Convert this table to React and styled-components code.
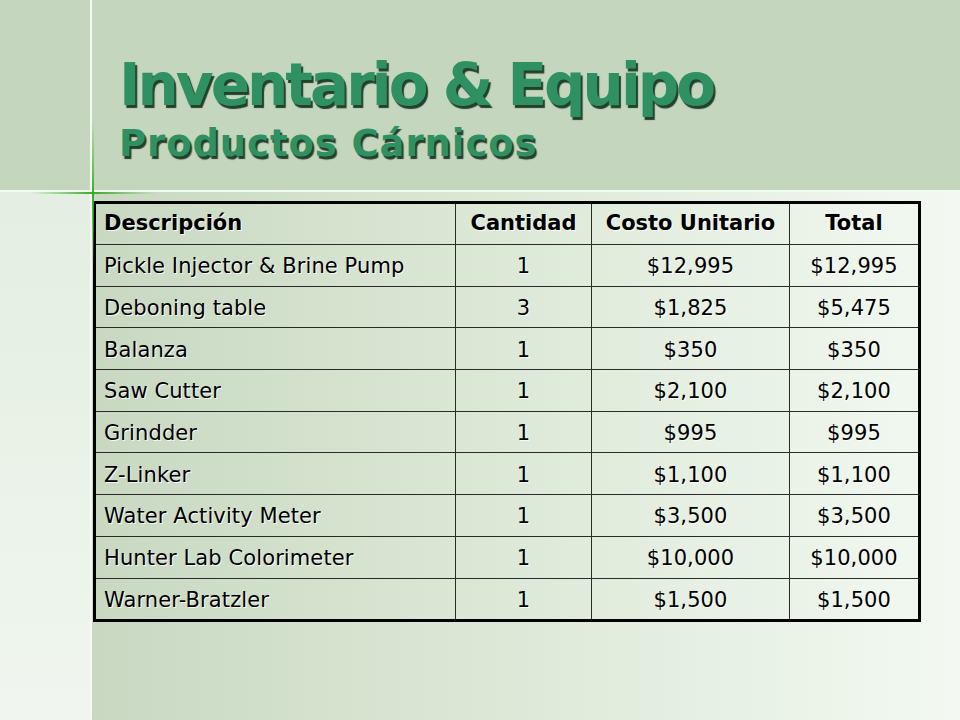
import React from "react";
import styled, { createGlobalStyle } from "styled-components";

const GlobalStyle = createGlobalStyle`
  html, body {
    margin: 0;
    padding: 0;
    width: 960px;
    height: 720px;
    overflow: hidden;
  }
  body {
    font-family: "DejaVu Sans", Verdana, sans-serif;
  }
`;

const Slide = styled.div`
  position: relative;
  width: 960px;
  height: 720px;
  display: grid;
  grid-template-columns: 92px 1fr;
  grid-template-rows: 192px 1fr;
  overflow: hidden;
`;

const Band = styled.div`
  background: #c5d6be;
  border-bottom: 2px solid #f4faf2;
  ${(p) => p.$corner && "border-right: 2px solid #f4faf2;"}
`;

const TitleBlock = styled.div`
  padding: 50px 0 0 27px;
  font-weight: bold;
  color: #2f9162;
  text-shadow: 2px 3px 1px #22402c;
`;

const Title = styled.h1`
  margin: 0;
  font-size: 58px;
  line-height: 71px;
  font-weight: bold;
  letter-spacing: -3px;
`;

const Subtitle = styled.h2`
  margin: 0;
  font-size: 37px;
  line-height: 46px;
  font-weight: bold;
  letter-spacing: 0.9px;
`;

const SideStrip = styled.div`
  background: linear-gradient(180deg, #e4eee2 0%, #f0f6ef 100%);
  border-right: 2px solid #f4faf2;
`;

const Main = styled.div`
  background: linear-gradient(90deg, #c8d8c1 0%, #dbe8d6 45%, #f3f9f2 100%);
  padding: 9px 0 0 1px;
`;

const Table = styled.table`
  width: 825px;
  border-collapse: collapse;
  border: 3px solid #000;
  table-layout: fixed;
  font-family: "DejaVu Sans", Verdana, sans-serif;
  color: #000;
`;

const Cell = styled.td`
  border: 1px solid #2a2a2a;
  height: ${(p) => (p.$head ? "38px" : "38.7px")};
  padding: ${(p) =>
    p.$head
      ? p.$left
        ? "0 4px 2px 8px"
        : "0 4px 2px 4px"
      : p.$left
      ? "2px 4px 0 8px"
      : "2px 4px 0 4px"};
  font-size: 21px;
  line-height: 24px;
  font-weight: ${(p) => (p.$head ? "bold" : "normal")};
  letter-spacing: ${(p) => (p.$head ? "0" : "0.1px")};
  text-align: ${(p) => (p.$left ? "left" : "center")};
  vertical-align: middle;
  white-space: nowrap;
  text-shadow: 1px 1px 0 rgba(255, 255, 255, 0.85);
`;

const Sparkle = styled.svg`
  position: absolute;
  left: 0;
  top: 0;
  pointer-events: none;
`;

const headers = ["Descripción", "Cantidad", "Costo Unitario", "Total"];

const rows = [
  ["Pickle Injector & Brine Pump", "1", "$12,995", "$12,995"],
  ["Deboning table", "3", "$1,825", "$5,475"],
  ["Balanza", "1", "$350", "$350"],
  ["Saw Cutter", "1", "$2,100", "$2,100"],
  ["Grindder", "1", "$995", "$995"],
  ["Z-Linker", "1", "$1,100", "$1,100"],
  ["Water Activity Meter", "1", "$3,500", "$3,500"],
  ["Hunter Lab Colorimeter", "1", "$10,000", "$10,000"],
  ["Warner-Bratzler", "1", "$1,500", "$1,500"],
];

const widths = [361, 136, 198, 130];

export default function App() {
  return (
    <>
      <GlobalStyle />
      <Slide>
        <Band $corner />
        <Band>
          <TitleBlock>
            <Title>Inventario &amp; Equipo</Title>
            <Subtitle>Productos Cárnicos</Subtitle>
          </TitleBlock>
        </Band>
        <SideStrip />
        <Main>
          <Table>
            <colgroup>
              {widths.map((w, i) => (
                <col key={i} style={{ width: w }} />
              ))}
            </colgroup>
            <thead>
              <tr>
                {headers.map((h, i) => (
                  <Cell as="th" key={h} $head $left={i === 0}>
                    {h}
                  </Cell>
                ))}
              </tr>
            </thead>
            <tbody>
              {rows.map((r) => (
                <tr key={r[0]}>
                  {r.map((c, i) => (
                    <Cell key={i} $left={i === 0}>
                      {c}
                    </Cell>
                  ))}
                </tr>
              ))}
            </tbody>
          </Table>
        </Main>
        <Sparkle width="960" height="720" viewBox="0 0 960 720">
          <defs>
            <linearGradient id="hz" x1="0" x2="1" y1="0" y2="0">
              <stop offset="0" stopColor="#4cb83a" stopOpacity="0" />
              <stop offset="0.5" stopColor="#3aa82c" stopOpacity="1" />
              <stop offset="1" stopColor="#4cb83a" stopOpacity="0" />
            </linearGradient>
            <linearGradient id="vt" x1="0" x2="0" y1="0" y2="1">
              <stop offset="0" stopColor="#4cb83a" stopOpacity="0" />
              <stop offset="0.5" stopColor="#3aa82c" stopOpacity="1" />
              <stop offset="1" stopColor="#4cb83a" stopOpacity="0" />
            </linearGradient>
          </defs>
          <rect x="30" y="192" width="126" height="2" fill="url(#hz)" />
          <rect x="92" y="120" width="2" height="150" fill="url(#vt)" />
        </Sparkle>
      </Slide>
    </>
  );
}
